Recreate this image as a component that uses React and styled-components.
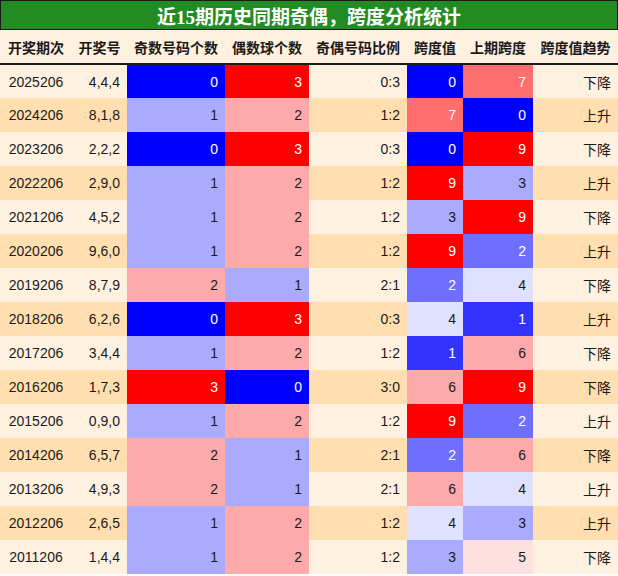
import React from "react";
import styled, { createGlobalStyle } from "styled-components";

const GlobalStyle = createGlobalStyle`
  body {
    margin: 0;
    background: #fff;
    font-family: "Liberation Sans", "Noto Sans CJK SC", sans-serif;
  }
`;

const Wrapper = styled.div`
  width: 618px;
`;

const Title = styled.div`
  box-sizing: border-box;
  height: 30px;
  border: 1px solid #1a1a1a;
  background: #228b22;
  color: #fff;
  display: flex;
  align-items: center;
  justify-content: center;
  font-family: "Liberation Serif", "Noto Sans CJK SC", serif;
  font-size: 19px;
  font-weight: bold;
`;

const Table = styled.table`
  width: 618px;
  border-collapse: collapse;
  table-layout: fixed;
`;

const HeadCell = styled.th`
  height: 33px;
  padding: 0;
  background: #fff1df;
  border-bottom: 2px solid #1a1a1a;
  font-size: 14px;
  font-weight: bold;
  color: #1a1a1a;
  text-align: center;
  white-space: nowrap;
`;

const Row = styled.tr`
  background: ${(p) => (p.$alt ? "#ffdfb0" : "#fff1df")};
`;

const Cell = styled.td`
  height: 34px;
  padding: 0 7px 0 0;
  box-sizing: border-box;
  font-size: 14px;
  text-align: right;
  white-space: nowrap;
  color: ${(p) => (p.$light ? "#fff" : "#1a1a1a")};
  background: ${(p) => p.$bg || "transparent"};
`;

const DateCell = styled(Cell)`
  text-align: center;
  padding: 0;
`;

const widths = [72, 55, 98, 84, 98, 56, 70, 85];
const headers = ["开奖期次", "开奖号", "奇数号码个数", "偶数球个数", "奇偶号码比例", "跨度值", "上期跨度", "跨度值趋势"];

// span scale 0..9, blue to red
const spanScale = [
  ["#0000ff", true],
  ["#3333ff", true],
  ["#6e6eff", true],
  ["#aaaaff", false],
  ["#e0e0ff", false],
  ["#ffe0e0", false],
  ["#ffaaaa", false],
  ["#ff6e6e", true],
  ["#ff3333", true],
  ["#ff0000", true],
];

const countScale = [
  ["#0000ff", true],
  ["#aaaaff", false],
  ["#ffaaaa", false],
  ["#ff0000", true],
];

const rows = [
  ["2025206", "4,4,4", 0, 3, 0, 7, "下降"],
  ["2024206", "8,1,8", 1, 2, 7, 0, "上升"],
  ["2023206", "2,2,2", 0, 3, 0, 9, "下降"],
  ["2022206", "2,9,0", 1, 2, 9, 3, "上升"],
  ["2021206", "4,5,2", 1, 2, 3, 9, "下降"],
  ["2020206", "9,6,0", 1, 2, 9, 2, "上升"],
  ["2019206", "8,7,9", 2, 1, 2, 4, "下降"],
  ["2018206", "6,2,6", 0, 3, 4, 1, "上升"],
  ["2017206", "3,4,4", 1, 2, 1, 6, "下降"],
  ["2016206", "1,7,3", 3, 0, 6, 9, "下降"],
  ["2015206", "0,9,0", 1, 2, 9, 2, "上升"],
  ["2014206", "6,5,7", 2, 1, 2, 6, "下降"],
  ["2013206", "4,9,3", 2, 1, 6, 4, "上升"],
  ["2012206", "2,6,5", 1, 2, 4, 3, "上升"],
  ["2011206", "1,4,4", 1, 2, 3, 5, "下降"],
];

const Scaled = ({ value, scale }) => {
  const [bg, light] = scale[value];
  return (
    <Cell $bg={bg} $light={light}>
      {value}
    </Cell>
  );
};

export default function App() {
  return (
    <Wrapper>
      <GlobalStyle />
      <Title>近15期历史同期奇偶，跨度分析统计</Title>
      <Table>
        <colgroup>
          {widths.map((w, i) => (
            <col key={i} style={{ width: w }} />
          ))}
        </colgroup>
        <thead>
          <tr>
            {headers.map((h) => (
              <HeadCell key={h}>{h}</HeadCell>
            ))}
          </tr>
        </thead>
        <tbody>
          {rows.map(([issue, nums, odd, even, span, prev, trend], i) => (
            <Row key={issue} $alt={i % 2 === 1}>
              <DateCell>{issue}</DateCell>
              <Cell>{nums}</Cell>
              <Scaled value={odd} scale={countScale} />
              <Scaled value={even} scale={countScale} />
              <Cell>{`${odd}:${even}`}</Cell>
              <Scaled value={span} scale={spanScale} />
              <Scaled value={prev} scale={spanScale} />
              <Cell>{trend}</Cell>
            </Row>
          ))}
        </tbody>
      </Table>
    </Wrapper>
  );
}
